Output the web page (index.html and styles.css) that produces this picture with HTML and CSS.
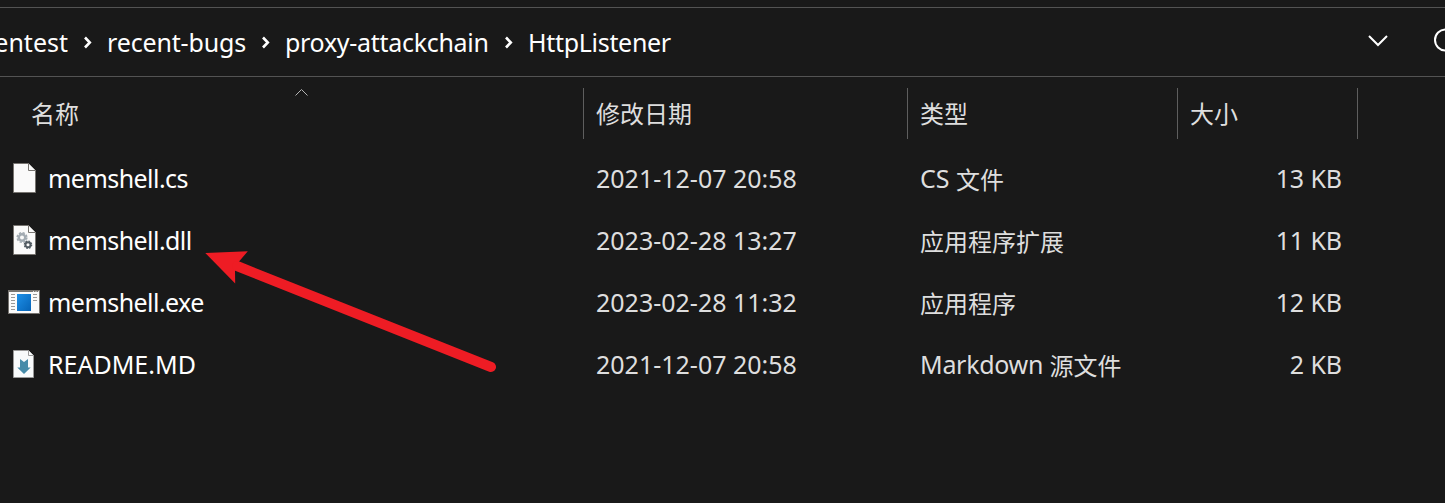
FILE: index.html
```html
<!DOCTYPE html>
<html lang="zh-CN">
<head>
<meta charset="utf-8">
<title>HttpListener</title>
<link rel="stylesheet" href="styles.css">
</head>
<body>
<main class="window">
  <nav class="address">
    <div class="crumb crumb-first">entest</div>
    <svg class="sep" viewBox="0 0 39 20"><path d="M17 5.5 L21.8 10.5 L17 15.5"/></svg>
    <div class="crumb crumb-bugs">recent-bugs</div>
    <svg class="sep" viewBox="0 0 39 20"><path d="M17 5.5 L21.8 10.5 L17 15.5"/></svg>
    <div class="crumb crumb-proxy">proxy-attackchain</div>
    <svg class="sep" viewBox="0 0 39 20"><path d="M17 5.5 L21.8 10.5 L17 15.5"/></svg>
    <div class="crumb crumb-last">HttpListener</div>
    <svg class="tools" viewBox="0 0 85 40"><path d="M9 14 L18 23 L27 14"/><circle cx="85.500" cy="18" r="10.500"/></svg>
  </nav>

  <div class="grid head">
    <div class="th th-name"><span>名称</span><svg class="sort" viewBox="0 0 16 10"><path d="M1.500 7.500 L7.500 1.500 L13.500 7.500"/></svg></div>
    <div class="th">修改日期</div>
    <div class="th">类型</div>
    <div class="th">大小</div>
  </div>

  <div class="grid row">
    <div class="name">
      <svg class="icon" viewBox="0 0 32 32"><path class="paper" d="M5.500 .5 H20.500 L27.500 7.500 V29.500 H5.500 Z"/><path class="paper" d="M20.500 .5 V7.500 H27.500"/></svg>
      <span>memshell.cs</span>
    </div>
    <div class="td">2021-12-07 20:58</div>
    <div class="td">CS <span class="cjk">文件</span></div>
    <div class="td size">13 KB</div>
  </div>

  <div class="grid row">
    <div class="name">
      <svg class="icon" viewBox="0 0 32 32"><path class="paper" d="M5.500 .5 H20.500 L27.500 7.500 V29.500 H5.500 Z"/><path class="paper" d="M20.500 .5 V7.500 H27.500"/>
        <circle cx="14" cy="12.500" r="3.200" fill="none" stroke="#a2abb2" stroke-width="2.400"/><circle cx="14" cy="12.500" r="4.800" fill="none" stroke="#a2abb2" stroke-width="1.600" stroke-dasharray="2.300 1.470"/>
        <circle cx="20" cy="19.700" r="2.500" fill="none" stroke="#515a61" stroke-width="1.900"/><circle cx="20" cy="19.700" r="3.700" fill="none" stroke="#515a61" stroke-width="1.200" stroke-dasharray="1.700 1.206"/></svg>
      <span>memshell.dll</span>
    </div>
    <div class="td">2023-02-28 13:27</div>
    <div class="td"><span class="cjk">应用程序扩展</span></div>
    <div class="td size">11 KB</div>
  </div>

  <div class="grid row">
    <div class="name">
      <svg class="icon" viewBox="0 0 32 32">
        <defs><linearGradient id="blue" x1="0" y1="0" x2="1" y2="1"><stop offset="0" stop-color="#1e90e8"/><stop offset="1" stop-color="#0663b6"/></linearGradient></defs>
        <rect x=".5" y="3.500" width="31" height="23" fill="#fafafa" stroke="#777470"/><path fill="#777470" d="M0 3h32v2H0z"/>
        <path d="M25 4.500h1M27.500 4.500h1M30 4.500h1" stroke="#ddd"/>
        <rect x="9" y="7" width="14" height="17" fill="url(#blue)"/>
        <path d="M3 7.500h4M3 10.500h4M3 13.500h4M3 16.500h4M3 19.500h4M3 22.500h4M25 7.500h4M25 10.500h4M25 13.500h4" stroke="#999"/></svg>
      <span>memshell.exe</span>
    </div>
    <div class="td">2023-02-28 11:32</div>
    <div class="td"><span class="cjk">应用程序</span></div>
    <div class="td size">12 KB</div>
  </div>

  <div class="grid row">
    <div class="name name-readme">
      <svg class="icon" viewBox="0 0 32 32"><path class="paper soft" d="M5.500 1.500 H20.500 L25.500 6.500 V28.500 H5.500 Z"/><path class="paper soft" d="M20.500 1.500 V6.500 H25.500"/><path fill="#468ba9" d="M12 10 L16 13 L20 10 V18.500 H22.700 L16 25 L9.300 18.500 H12 Z"/></svg>
      <span>README.MD</span>
    </div>
    <div class="td">2021-12-07 20:58</div>
    <div class="td"><span class="md">Markdown</span> <span class="cjk">源文件</span></div>
    <div class="td size">2 KB</div>
  </div>

  <svg class="arrow" viewBox="0 0 300 150"><path class="arrow-tip" d="M5.300 18 L47.800 16.300 L39 26.500 L35 35.500 L35.200 48.500 Z"/><path class="arrow-shaft" d="M37 31 L291 132"/></svg>
</main>
</body>
</html>
```
FILE: styles.css
```css
* { box-sizing: border-box; }
body {
  margin: 0;
  background: #191919;
  color: #fff;
  font: 25px/34px "Noto Sans", "Noto Sans CJK SC", sans-serif;
}
.window {
  position: relative;
  height: 503px;
  padding-top: 7px;
  overflow: hidden;
  white-space: nowrap;
}
.address {
  display: flex;
  align-items: center;
  height: 70px;
  border-top: 1px solid #535353;
  border-bottom: 1px solid #535353;
}
.crumb { flex: none; padding-bottom: 1px; }
.crumb-first { display: flex; justify-content: flex-end; width: 68px; overflow: hidden; }
.crumb-bugs { width: 139px; letter-spacing: -.15px; }
.crumb-proxy { width: 204px; letter-spacing: -.3px; }
.crumb-last { width: 145px; letter-spacing: -.3px; }
.sep { flex: none; width: 39px; height: 20px; }
.sep path, .tools path, .tools circle {
  fill: none;
  stroke: #fff;
  stroke-width: 2;
}
.sep path { stroke-width: 2.6; }
.tools { width: 85px; height: 40px; margin-left: auto; }
.grid {
  display: grid;
  grid-template-columns: 584px 324px 270px 180px;
}
.head { height: 71px; padding: 11px 0 9px; }
.th {
  height: 51px;
  padding: 8px 12px 0;
  border-right: 1px solid #5e5e5e;
  color: #dedede;
  font: 24px/34px "Noto Sans CJK SC", sans-serif;
}
.th-name { position: relative; padding-left: 31px; }
.sort { position: absolute; left: 294px; top: 0; width: 16px; height: 10px; }
.sort path { fill: none; stroke: #b4b4b4; }
.row { height: 62px; }
.name { display: flex; padding: 13px 0 0 8px; letter-spacing: -.55px; }
.name-readme { letter-spacing: 0; }
.name span { margin-left: 8px; }
.icon { width: 32px; height: 32px; margin-top: 2px; }
.paper { fill: #fafafa; stroke: #777470; }
.soft { stroke: #999; fill: #f8fafb; }
.td { padding: 13px 16px 0 12px; color: #dedede; }
.size { text-align: right; letter-spacing: -.1px; }
.md { letter-spacing: -.3px; }
.cjk {
  font-family: "Noto Sans CJK SC", sans-serif;
  font-size: 24px;
  line-height: 24px;
  vertical-align: -1px;
}
.arrow { position: absolute; left: 200px; top: 235px; width: 300px; height: 150px; }
.arrow-tip { fill: #ee1c24; }
.arrow-shaft { fill: none; stroke: #ee1c24; stroke-width: 10; stroke-linecap: round; }
```
